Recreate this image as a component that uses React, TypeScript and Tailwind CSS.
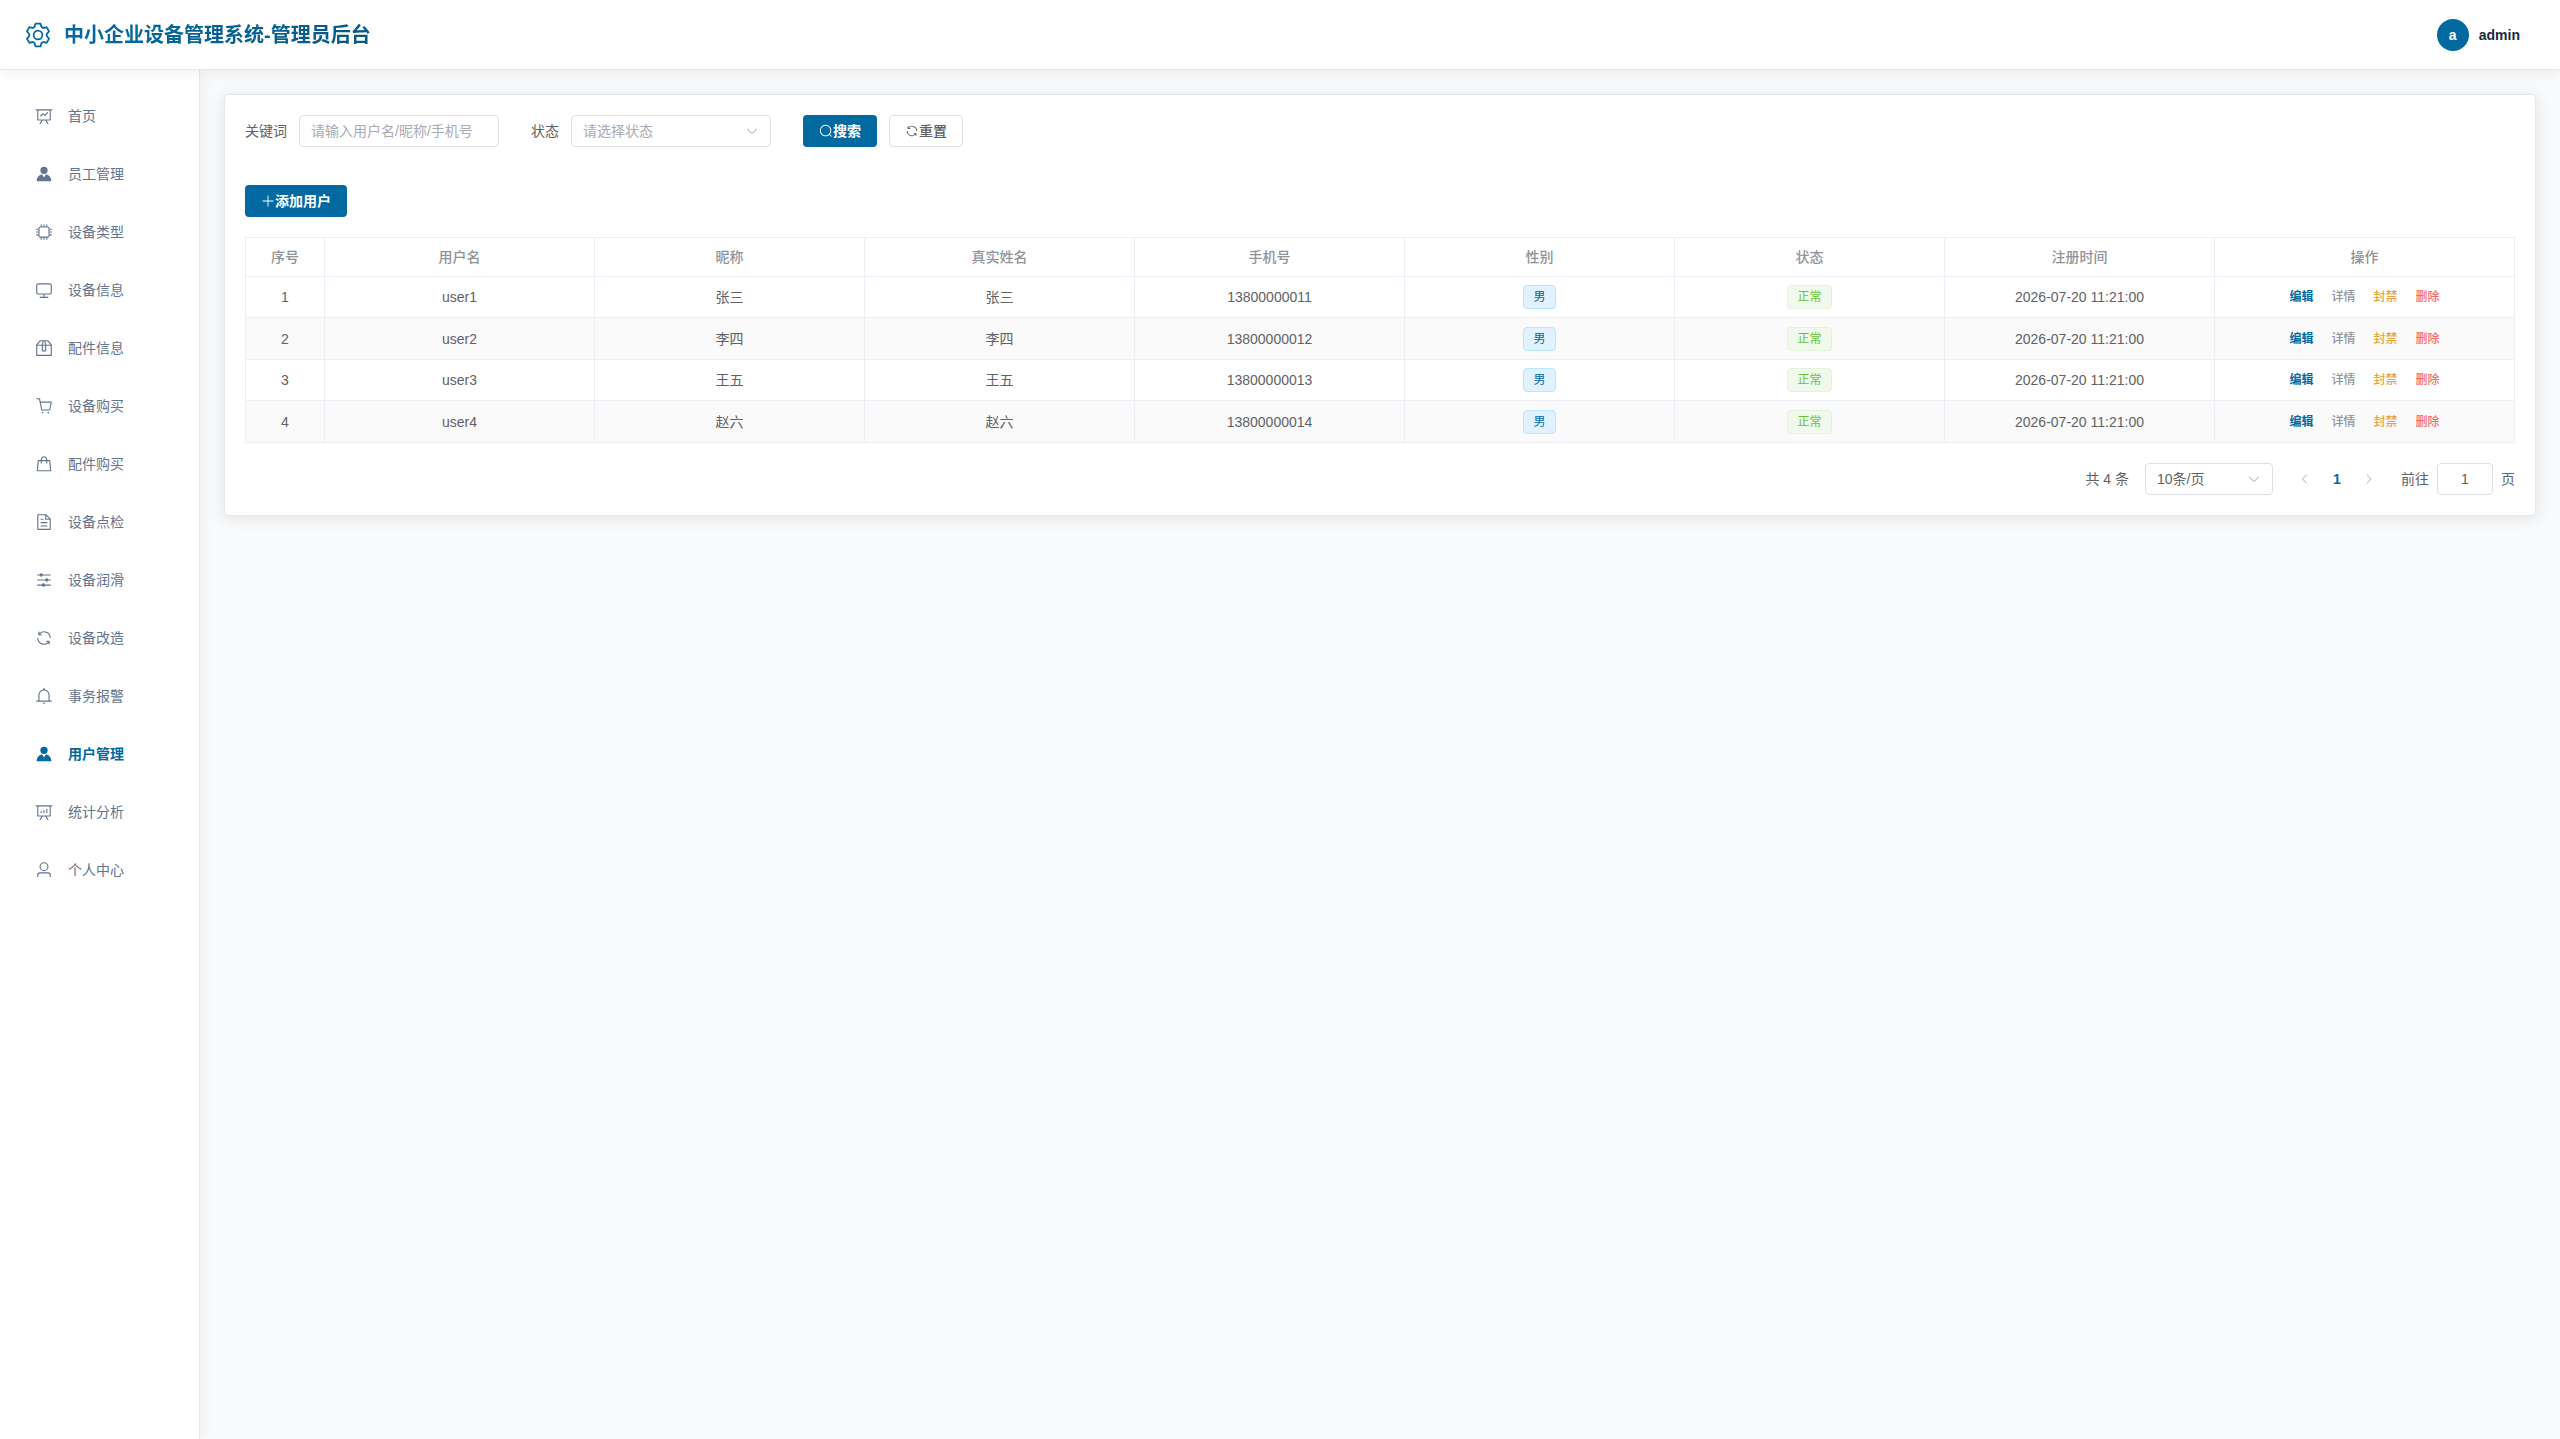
import React, { useState } from "react"

const ICONS = {
    setting: "M600.704 64a32 32 0 0 1 30.464 22.208l35.2 109.376c14.784 7.232 28.928 15.36 42.432 24.512l112.384-24.192a32 32 0 0 1 34.432 15.36L944.32 364.8a32 32 0 0 1-4.032 37.504l-77.12 85.12a357.12 357.12 0 0 1 0 49.024l77.12 85.248a32 32 0 0 1 4.032 37.504l-88.704 153.6a32 32 0 0 1-34.432 15.296L708.8 803.904c-13.44 9.088-27.648 17.28-42.368 24.512l-35.264 109.376A32 32 0 0 1 600.704 960H423.296a32 32 0 0 1-30.464-22.208L357.696 828.48a351.616 351.616 0 0 1-42.56-24.64l-112.32 24.256a32 32 0 0 1-34.432-15.36L79.68 659.2a32 32 0 0 1 4.032-37.504l77.12-85.248a357.12 357.12 0 0 1 0-48.896l-77.12-85.248A32 32 0 0 1 79.68 364.8l88.704-153.6a32 32 0 0 1 34.432-15.296l112.32 24.256c13.568-9.152 27.776-17.408 42.56-24.64l35.2-109.312A32 32 0 0 1 423.232 64H600.64zm-23.424 64H446.72l-36.352 113.088-24.512 11.968a294.113 294.113 0 0 0-34.816 20.096l-22.656 15.36-116.224-25.088-65.28 113.152 79.68 88.192-1.92 27.136a293.12 293.12 0 0 0 0 40.192l1.92 27.136-79.808 88.192 65.344 113.152 116.224-25.024 22.656 15.296a294.113 294.113 0 0 0 34.816 20.096l24.512 11.968L446.72 896h130.688l36.48-113.152 24.448-11.904a288.282 288.282 0 0 0 34.752-20.096l22.592-15.296 116.288 25.024 65.28-113.152-79.744-88.192 1.92-27.136a293.12 293.12 0 0 0 0-40.256l-1.92-27.136 79.808-88.128-65.344-113.152-116.288 24.96-22.592-15.232a287.616 287.616 0 0 0-34.752-20.096l-24.448-11.904L577.344 128zM512 320a192 192 0 1 1 0 384 192 192 0 0 1 0-384zm0 64a128 128 0 1 0 0 256 128 128 0 0 0 0-256z",
    dataLine: "M359.168 768H160a32 32 0 0 1-32-32V192H64a32 32 0 0 1 0-64h896a32 32 0 1 1 0 64h-64v544a32 32 0 0 1-32 32H665.216l110.848 192h-73.856L591.36 768H433.024L322.176 960H248.32l110.848-192zM832 192H192v512h640V192zM342.656 534.656a32 32 0 1 1-45.312-45.312L444.992 341.76l125.44 94.08L679.04 300.032a32 32 0 1 1 49.92 39.936L581.632 524.224 451.008 426.24 342.656 534.592z",
    dataAnalysis: "m665.216 768 110.848 192h-73.856L591.36 768H433.024L322.176 960H248.32l110.848-192H160a32 32 0 0 1-32-32V192H64a32 32 0 0 1 0-64h896a32 32 0 1 1 0 64h-64v544a32 32 0 0 1-32 32H665.216zM832 192H192v512h640V192zM352 448a32 32 0 0 1 32 32v64a32 32 0 0 1-64 0v-64a32 32 0 0 1 32-32zm160-64a32 32 0 0 1 32 32v128a32 32 0 0 1-64 0V416a32 32 0 0 1 32-32zm160-64a32 32 0 0 1 32 32v192a32 32 0 1 1-64 0V352a32 32 0 0 1 32-32z",
    avatar: "M628.736 528.896A416 416 0 0 1 928 928H96a415.872 415.872 0 0 1 299.264-399.104L512 704l116.736-175.104zM720 304a208 208 0 1 1-416 0 208 208 0 0 1 416 0z",
    cpu: "M320 256a64 64 0 0 0-64 64v384a64 64 0 0 0 64 64h384a64 64 0 0 0 64-64V320a64 64 0 0 0-64-64H320zm0-64h384a128 128 0 0 1 128 128v384a128 128 0 0 1-128 128H320a128 128 0 0 1-128-128V320a128 128 0 0 1 128-128zM512 64a32 32 0 0 1 32 32v128h-64V96a32 32 0 0 1 32-32zM672 64a32 32 0 0 1 32 32v128h-64V96a32 32 0 0 1 32-32zM352 64a32 32 0 0 1 32 32v128h-64V96a32 32 0 0 1 32-32zM512 960a32 32 0 0 1-32-32V800h64v128a32 32 0 0 1-32 32zM352 960a32 32 0 0 1-32-32V800h64v128a32 32 0 0 1-32 32zM672 960a32 32 0 0 1-32-32V800h64v128a32 32 0 0 1-32 32zM64 512a32 32 0 0 1 32-32h128v64H96a32 32 0 0 1-32-32zM64 352a32 32 0 0 1 32-32h128v64H96a32 32 0 0 1-32-32zM64 672a32 32 0 0 1 32-32h128v64H96a32 32 0 0 1-32-32zM960 512a32 32 0 0 1-32 32H800v-64h128a32 32 0 0 1 32 32zM960 672a32 32 0 0 1-32 32H800v-64h128a32 32 0 0 1 32 32zM960 352a32 32 0 0 1-32 32H800v-64h128a32 32 0 0 1 32 32z",
    monitor: "M544 768v128h192a32 32 0 1 1 0 64H288a32 32 0 1 1 0-64h192V768H192A128 128 0 0 1 64 640V256a128 128 0 0 1 128-128h640a128 128 0 0 1 128 128v384a128 128 0 0 1-128 128H544zM192 192a64 64 0 0 0-64 64v384a64 64 0 0 0 64 64h640a64 64 0 0 0 64-64V256a64 64 0 0 0-64-64H192z",
    box: "M317.056 128 128 344.064V896h768V344.064L706.944 128H317.056zm-14.528-64h418.944a32 32 0 0 1 24.064 10.88l206.528 236.096A32 32 0 0 1 960 332.032V928a32 32 0 0 1-32 32H96a32 32 0 0 1-32-32V332.032a32 32 0 0 1 7.936-21.12L278.4 75.008A32 32 0 0 1 302.528 64zM64 320h896v64H64zM448 327.872V640h128V327.872L526.08 128h-28.16L448 327.872zM448 64h128l64 256v352a32 32 0 0 1-32 32H416a32 32 0 0 1-32-32V320l64-256z",
    cart: "M432 928a48 48 0 1 1 0-96 48 48 0 0 1 0 96zm320 0a48 48 0 1 1 0-96 48 48 0 0 1 0 96zM96 128a32 32 0 0 1 0-64h160a32 32 0 0 1 31.36 25.728L320.64 256H928a32 32 0 0 1 31.296 38.72l-96 448A32 32 0 0 1 832 768H384a32 32 0 0 1-31.36-25.728L229.76 128H96zm314.24 576h395.904l82.304-384H333.44l76.8 384z",
    goods: "M320 288v-22.336C320 154.688 405.504 64 512 64s192 90.688 192 201.664v22.4h131.072a32 32 0 0 1 31.808 28.8l57.6 576a32 32 0 0 1-31.808 35.2H131.328a32 32 0 0 1-31.808-35.2l57.6-576a32 32 0 0 1 31.808-28.8H320zm64 0h256v-22.336C640 189.248 582.272 128 512 128c-70.272 0-128 61.248-128 137.664v22.4zm-64 64H217.92l-51.2 512h690.56l-51.264-512H704v96a32 32 0 1 1-64 0v-96H384v96a32 32 0 0 1-64 0v-96z",
    document: "M832 384H576V128H192v768h640V384zm-26.496-64L640 154.496V320h165.504zM160 64h480l256 256v608a32 32 0 0 1-32 32H160a32 32 0 0 1-32-32V96a32 32 0 0 1 32-32zm160 448h384v64H320v-64zm0-192h160v64H320v-64zm0 384h384v64H320v-64z",
    operation: "M389.44 768a96.064 96.064 0 0 1 181.12 0H896v64H570.56a96.064 96.064 0 0 1-181.12 0H128v-64h261.44zm192-288a96.064 96.064 0 0 1 181.12 0H896v64H762.56a96.064 96.064 0 0 1-181.12 0H128v-64h453.44zm-320-288a96.064 96.064 0 0 1 181.12 0H896v64H442.56a96.064 96.064 0 0 1-181.12 0H128v-64h133.44z",
    refresh: "M771.776 794.88A384 384 0 0 1 128 512h64a320 320 0 0 0 555.712 216.448H654.72a32 32 0 1 1 0-64h149.056a32 32 0 0 1 32 32v148.928a32 32 0 1 1-64 0v-50.56zM276.288 295.616h92.992a32 32 0 0 1 0 64H220.16a32 32 0 0 1-32-32V178.56a32 32 0 0 1 64 0v50.56A384 384 0 0 1 896.128 512h-64a320 320 0 0 0-555.776-216.384z",
    bell: "M512 64a64 64 0 0 1 64 64v64H448v-64a64 64 0 0 1 64-64zM256 768h512V448a256 256 0 1 0-512 0v320zm256-640a320 320 0 0 1 320 320v384H192V448a320 320 0 0 1 320-320zM96 768h832q32 0 32 32t-32 32H96q-32 0-32-32t32-32zm352 128h128a64 64 0 0 1-128 0z",
    user: "M512 512a192 192 0 1 0 0-384 192 192 0 0 0 0 384zm0 64a256 256 0 1 1 0-512 256 256 0 0 1 0 512zm320 320v-96a96 96 0 0 0-96-96H288a96 96 0 0 0-96 96v96a32 32 0 1 1-64 0v-96a160 160 0 0 1 160-160h448a160 160 0 0 1 160 160v96a32 32 0 1 1-64 0z",
    search: "m795.904 750.72 124.992 124.928a32 32 0 0 1-45.248 45.248L750.656 795.904a416 416 0 1 1 45.248-45.248zM480 832a352 352 0 1 0 0-704 352 352 0 0 0 0 704z",
    plus: "M480 480V128a32 32 0 0 1 64 0v352h352a32 32 0 1 1 0 64H544v352a32 32 0 1 1-64 0V544H128a32 32 0 0 1 0-64h352z",
    arrowDown: "M831.872 340.864 512 652.672 192.128 340.864a30.592 30.592 0 0 0-42.752 0 29.12 29.12 0 0 0 0 41.6L489.664 714.24a32 32 0 0 0 44.672 0l340.288-331.712a29.12 29.12 0 0 0 0-41.728 30.592 30.592 0 0 0-42.752 0z",
    arrowLeft: "M609.408 149.376 277.76 489.6a32 32 0 0 0 0 44.672l331.648 340.352a29.12 29.12 0 0 0 41.728 0 30.592 30.592 0 0 0 0-42.752L339.264 511.936l311.872-319.872a30.592 30.592 0 0 0 0-42.688 29.12 29.12 0 0 0-41.728 0z",
    arrowRight: "M340.864 149.312a30.592 30.592 0 0 0 0 42.752L652.736 512 340.864 831.872a30.592 30.592 0 0 0 0 42.752 29.12 29.12 0 0 0 41.728 0L714.24 534.336a32 32 0 0 0 0-44.672L382.592 149.376a29.12 29.12 0 0 0-41.728 0z",
}

type IconName = keyof typeof ICONS

interface IconProps {
    name: IconName
    className?: string
}

const Icon = ({ name, className = "size-[14px]" }: IconProps) => (
    <svg viewBox="0 0 1024 1024" fill="currentColor" aria-hidden="true" className={`shrink-0 ${className}`}>
        <path d={ICONS[name]} />
    </svg>
)

const MENU: { label: string; icon: IconName }[] = [
    { label: "首页", icon: "dataLine" },
    { label: "员工管理", icon: "avatar" },
    { label: "设备类型", icon: "cpu" },
    { label: "设备信息", icon: "monitor" },
    { label: "配件信息", icon: "box" },
    { label: "设备购买", icon: "cart" },
    { label: "配件购买", icon: "goods" },
    { label: "设备点检", icon: "document" },
    { label: "设备润滑", icon: "operation" },
    { label: "设备改造", icon: "refresh" },
    { label: "事务报警", icon: "bell" },
    { label: "用户管理", icon: "avatar" },
    { label: "统计分析", icon: "dataAnalysis" },
    { label: "个人中心", icon: "user" },
]

const COLUMNS = ["序号", "用户名", "昵称", "真实姓名", "手机号", "性别", "状态", "注册时间", "操作"]

const USERS = [
    { username: "user1", name: "张三", phone: "13800000011" },
    { username: "user2", name: "李四", phone: "13800000012" },
    { username: "user3", name: "王五", phone: "13800000013" },
    { username: "user4", name: "赵六", phone: "13800000014" },
]

const CELL = "border-r border-b border-[#ebeef5] p-0 text-center"

const Header = () => (
    <header className="relative z-10 flex h-[70px] items-center justify-between border-b border-slate-200 bg-white pr-10 pl-6 shadow-[0_4px_12px_rgba(0,0,0,0.05)]">
        <div className="flex items-center gap-3">
            <Icon name="setting" className="size-7 text-[#0369a1]" />
            <h1 className="bg-gradient-to-r from-[#0369a1] to-[#075985] bg-clip-text text-xl font-bold text-transparent">
                中小企业设备管理系统-管理员后台
            </h1>
        </div>
        <div className="flex items-center gap-[10px]">
            <span className="flex size-8 items-center justify-center rounded-full bg-[#0369a1] font-bold text-white">a</span>
            <span className="font-bold text-slate-800">admin</span>
        </div>
    </header>
)

const Sidebar = () => {
    const [active, setActive] = useState("用户管理")

    return (
        <aside className="w-[200px] shrink-0 border-r border-slate-200 bg-white pt-[17px] shadow-[4px_0_12px_rgba(0,0,0,0.04)]">
            <nav>
                {MENU.map(item => (
                    <a
                        key={item.label}
                        href="#"
                        onClick={() => setActive(item.label)}
                        className={`flex h-[58px] items-center gap-[15px] pl-[35px] ${active === item.label ? "font-bold text-[#0369a1]" : "text-slate-500"}`}
                    >
                        <Icon name={item.icon} className="size-[18px]" />
                        {item.label}
                    </a>
                ))}
            </nav>
        </aside>
    )
}

const Filters = () => {
    const [keyword, setKeyword] = useState("")
    const [status, setStatus] = useState("")

    const handleReset = () => {
        setKeyword("")
        setStatus("")
    }

    return (
        <form onSubmit={e => e.preventDefault()} className="flex items-center gap-8">
            <div className="flex items-center gap-3">
                <label htmlFor="keyword">关键词</label>
                <input
                    id="keyword"
                    type="text"
                    value={keyword}
                    onChange={e => setKeyword(e.target.value)}
                    placeholder="请输入用户名/昵称/手机号"
                    className="h-8 w-[200px] rounded border border-[#dcdfe6] bg-white px-[11px] placeholder:text-[#a8abb2]"
                />
            </div>
            <div className="flex items-center gap-3">
                <label htmlFor="status">状态</label>
                <div className="relative">
                    <select
                        id="status"
                        value={status}
                        onChange={e => setStatus(e.target.value)}
                        className={`h-8 w-[200px] appearance-none rounded border border-[#dcdfe6] bg-white px-[11px] ${status ? "" : "text-[#a8abb2]"}`}
                    >
                        <option value="">请选择状态</option>
                        <option value="1">正常</option>
                        <option value="0">封禁</option>
                    </select>
                    <Icon name="arrowDown" className="pointer-events-none absolute top-[9px] right-3 size-[14px] text-[#a8abb2]" />
                </div>
            </div>
            <div className="flex gap-3">
                <button type="submit" className="flex h-8 items-center rounded bg-[#0369a1] px-4 font-bold text-white">
                    <Icon name="search" />
                    搜索
                </button>
                <button type="button" onClick={handleReset} className="flex h-8 items-center rounded border border-[#dcdfe6] bg-white px-[15px] font-medium">
                    <Icon name="refresh" />
                    重置
                </button>
            </div>
        </form>
    )
}

const UserTable = () => (
    <table className="mt-5 w-full table-fixed border-separate border-spacing-0 border-l border-[#ebeef5]">
        <colgroup>
            <col className="w-[79px]" />
            <col span={7} />
            <col className="w-[300px]" />
        </colgroup>
        <thead>
            <tr className="h-10 text-[#909399]">
                {COLUMNS.map(column => (
                    <th key={column} className={`${CELL} border-t font-medium`}>{column}</th>
                ))}
            </tr>
        </thead>
        <tbody>
            {USERS.map((user, index) => (
                <tr key={user.username} className="odd:h-[41px] even:h-[42px] even:bg-[#fafafa]">
                    <td className={CELL}>{index + 1}</td>
                    <td className={CELL}>{user.username}</td>
                    <td className={CELL}>{user.name}</td>
                    <td className={CELL}>{user.name}</td>
                    <td className={CELL}>{user.phone}</td>
                    <td className={CELL}>
                        <span className="inline-flex h-6 items-center rounded border border-sky-200 bg-sky-100 px-[9px] align-middle text-xs text-[#0369a1]">男</span>
                    </td>
                    <td className={CELL}>
                        <span className="inline-flex h-6 items-center rounded border border-[#e1f3d8] bg-[#f0f9eb] px-[9px] align-middle text-xs text-[#67c23a]">正常</span>
                    </td>
                    <td className={CELL}>2026-07-20 11:21:00</td>
                    <td className={CELL}>
                        <div className="flex justify-center gap-[18px] text-xs font-medium">
                            <button type="button" className="font-bold text-[#0369a1]">编辑</button>
                            <button type="button" className="text-[#909399]">详情</button>
                            <button type="button" className="text-[#e6a23c]">封禁</button>
                            <button type="button" className="text-[#f56c6c]">删除</button>
                        </div>
                    </td>
                </tr>
            ))}
        </tbody>
    </table>
)

const Pagination = () => {
    const [page, setPage] = useState("1")

    return (
        <div className="mt-5 flex items-center justify-end gap-4">
            <span>共 4 条</span>
            <div className="relative">
                <select aria-label="每页条数" className="h-8 w-32 appearance-none rounded border border-[#dcdfe6] bg-white px-[11px]">
                    <option>10条/页</option>
                    <option>20条/页</option>
                    <option>50条/页</option>
                </select>
                <Icon name="arrowDown" className="pointer-events-none absolute top-[9px] right-3 size-[14px] text-[#a8abb2]" />
            </div>
            <div className="flex items-center">
                <button type="button" disabled aria-label="上一页" className="flex size-8 items-center justify-center text-[#a8abb2]">
                    <Icon name="arrowLeft" className="size-3" />
                </button>
                <button type="button" className="size-8 font-bold text-[#0369a1]">1</button>
                <button type="button" disabled aria-label="下一页" className="flex size-8 items-center justify-center text-[#a8abb2]">
                    <Icon name="arrowRight" className="size-3" />
                </button>
            </div>
            <label className="flex items-center gap-2">
                前往
                <input
                    type="text"
                    value={page}
                    onChange={e => setPage(e.target.value)}
                    className="h-8 w-14 rounded border border-[#dcdfe6] bg-white text-center"
                />
                页
            </label>
        </div>
    )
}

export default function App() {
    return (
        <div className="flex min-h-screen flex-col bg-slate-50 font-['Liberation_Sans','Noto_Sans_CJK_SC',sans-serif] text-sm text-[#606266]">
            <Header />
            <div className="flex grow">
                <Sidebar />
                <main className="min-w-0 grow p-6">
                    <section className="rounded border border-[#e4e7ed] bg-white p-5 shadow-[0_2px_16px_rgba(0,0,0,0.1)]">
                        <Filters />
                        <button type="button" className="mt-[38px] flex h-8 items-center rounded bg-[#0369a1] px-4 font-bold text-white">
                            <Icon name="plus" />
                            添加用户
                        </button>
                        <UserTable />
                        <Pagination />
                    </section>
                </main>
            </div>
        </div>
    )
}
